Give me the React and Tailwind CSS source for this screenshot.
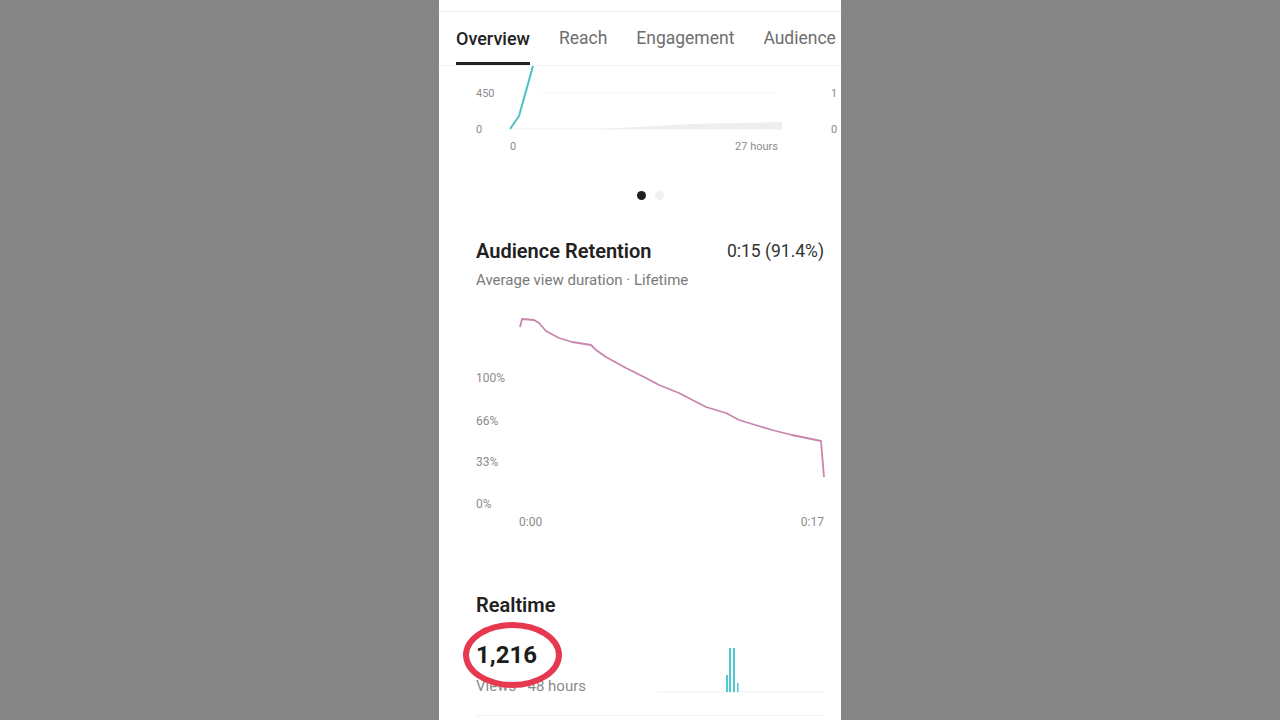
import React from 'react';

const retention = [
  [81, 27], [83, 19], [95, 20], [100, 23], [107, 31], [120, 38], [133, 42],
  [152, 45], [157, 50], [167, 57], [187, 68], [207, 78], [220, 85], [240, 93],
  [267, 107], [287, 113], [300, 120], [333, 130], [353, 135], [382, 141], [385, 177],
];

function Tab({ label, active }) {
  return (
    <div
      className={
        'h-full flex items-center pt-[3px] border-b-[3px] ' +
        (active
          ? 'border-[#222222] text-[#222222] font-medium text-[18px]'
          : 'border-transparent text-[#6e6e6e] font-normal text-[17.5px]')
      }
    >
      <span>{label}</span>
    </div>
  );
}

function ReachChart() {
  return (
    <svg width="402" height="104" className="shrink-0 block">
      <line x1="100" y1="27" x2="337" y2="27" stroke="#f6f6f6" strokeWidth="1" />
      <line x1="71" y1="63" x2="343" y2="63" stroke="#efefef" strokeWidth="1" />
      <polygon points="160,63 253,58 343,56 343,63" fill="#eeeeee" />
      <polyline points="71,63 80,50 94,0" fill="none" stroke="#4cc2c6" strokeWidth="2" strokeLinejoin="round" />
      <g fontSize="11" fill="#8c8c8c" fontFamily="Roboto, sans-serif">
        <text x="37" y="28" dominantBaseline="middle">450</text>
        <text x="37" y="64" dominantBaseline="middle">0</text>
        <text x="392" y="28" dominantBaseline="middle">1</text>
        <text x="392" y="64" dominantBaseline="middle">0</text>
        <text x="71" y="81" dominantBaseline="middle">0</text>
        <text x="339" y="81" dominantBaseline="middle" textAnchor="end">27 hours</text>
      </g>
    </svg>
  );
}

function RetentionChart() {
  return (
    <svg width="402" height="240" className="shrink-0 block">
      <polyline
        points={retention.map((p) => p.join(',')).join(' ')}
        fill="none"
        stroke="#c985ad"
        strokeWidth="1.8"
        strokeLinejoin="round"
      />
      <g fontSize="12" fill="#8c8c8c" fontFamily="Roboto, sans-serif">
        <text x="37" y="79" dominantBaseline="middle">100%</text>
        <text x="37" y="122" dominantBaseline="middle">66%</text>
        <text x="37" y="163" dominantBaseline="middle">33%</text>
        <text x="37" y="205" dominantBaseline="middle">0%</text>
        <text x="80" y="223" dominantBaseline="middle">0:00</text>
        <text x="385" y="223" dominantBaseline="middle" textAnchor="end">0:17</text>
      </g>
    </svg>
  );
}

function RealtimeBars() {
  return (
    <svg width="167" height="56" className="shrink-0 block">
      <line x1="0" y1="52" x2="167" y2="52" stroke="#f0f0f0" strokeWidth="1" />
      <rect x="69" y="35" width="2" height="17" fill="#4dc9d3" />
      <rect x="72" y="8" width="2" height="44" fill="#4dc9d3" />
      <rect x="76" y="8" width="2" height="44" fill="#4dc9d3" />
      <rect x="80" y="43" width="1.5" height="9" fill="#4dc9d3" />
    </svg>
  );
}

export default function App() {
  return (
    <div className="min-h-screen w-full bg-[#858585] flex justify-center">
      <div className="w-[402px] h-[720px] bg-white overflow-hidden flex flex-col font-['Roboto',sans-serif]">
        <div className="h-[12px] border-b border-[#f0f0f0] shrink-0" />

        {/* Tabs */}
        <nav className="h-[54px] flex gap-[29px] pl-[17px] border-b border-[#f3f3f3] shrink-0 whitespace-nowrap">
          <Tab label="Overview" active />
          <Tab label="Reach" />
          <Tab label="Engagement" />
          <Tab label="Audience" />
        </nav>

        <ReachChart />

        {/* Pager dots */}
        <div className="h-[50px] flex items-center justify-center gap-[9px] pl-[20px] shrink-0">
          <span className="w-[9px] h-[9px] rounded-full bg-[#1f1f1f]" />
          <span className="w-[9px] h-[9px] rounded-full bg-[#f0f0f0]" />
        </div>

        {/* Audience retention */}
        <div className="flex items-center justify-between pl-[37px] pr-[17px] pt-[19px]">
          <h2 className="text-[20px] leading-[24px] font-semibold text-[#212121]">Audience Retention</h2>
          <span className="text-[17.5px] leading-[24px] text-[#333333]">0:15 (91.4%)</span>
        </div>
        <p className="mt-[7px] pl-[37px] text-[15px] leading-[20px] text-[#7a7a7a]">
          Average view duration · Lifetime
        </p>
        <div className="mt-[10px]">
          <RetentionChart />
        </div>

        {/* Realtime */}
        <h2 className="mt-[53px] pl-[37px] text-[20px] leading-[24px] font-semibold text-[#212121]">Realtime</h2>
        <div className="mt-[23px] flex pl-[37px] pr-[17px]">
          <div className="flex flex-col">
            <div className="relative">
              <span className="text-[24px] leading-[30px] font-bold text-[#1c1c1c]">1,216</span>
              <span className="absolute left-[-13px] top-[-18px] w-[99px] h-[66px] rounded-[50%] border-[6px] border-[#e6394f]" />
            </div>
            <span className="mt-[6px] text-[15px] leading-[20px] text-[#8a8a8a]">Views · 48 hours</span>
          </div>
          <div className="ml-auto">
            <RealtimeBars />
          </div>
        </div>
        <div className="mt-[19px] mx-[37px] mr-[17px] h-px bg-[#f4f4f4] shrink-0" />
      </div>
    </div>
  );
}
